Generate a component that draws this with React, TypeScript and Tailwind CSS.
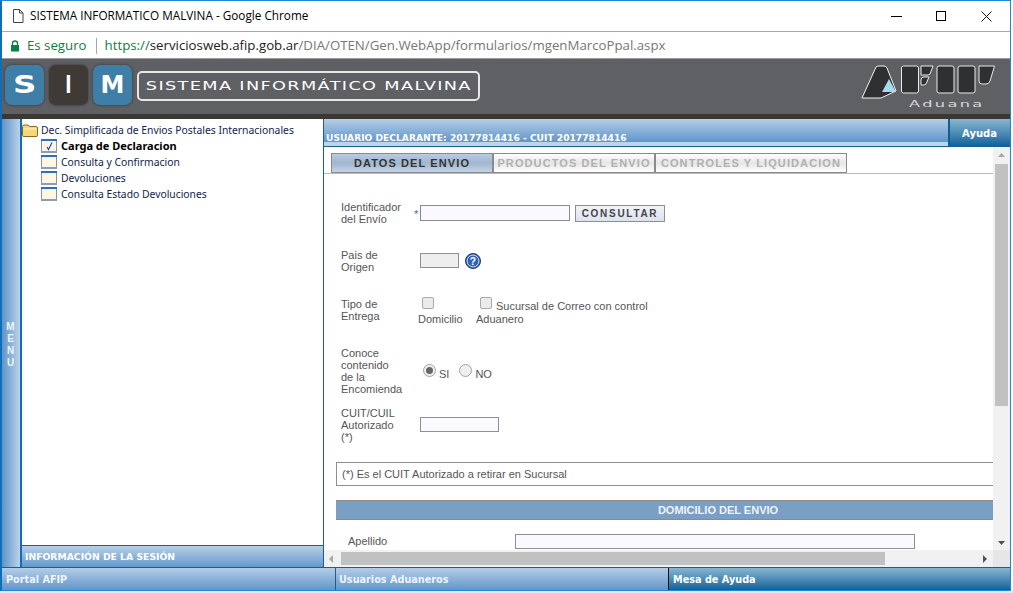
import React from "react";

const barFont = "font-['DejaVu_Sans',sans-serif] font-bold text-white";

function Book({ checked }: { checked?: boolean }) {
  return (
    <svg width="16" height="14" viewBox="0 0 16 14" className="shrink-0">
      <rect x="0.5" y="0.5" width="15" height="12.5" fill="#fdf6e3" stroke="#7f93b5" />
      <rect x="0" y="0" width="16" height="2" fill="#2f6fc0" />
      <rect x="0" y="12" width="16" height="2" fill="#8d9bb3" />
      {checked && <path d="M6 8l1.5 2.5L11 3.5" fill="none" stroke="#1a3fb0" strokeWidth="1.1" />}
    </svg>
  );
}

function TreeItem({ label, bold, checked }: { label: string; bold?: boolean; checked?: boolean }) {
  return (
    <div className="flex h-4 items-center gap-[4px] pl-[19px]">
      <Book checked={checked} />
      <span className={bold ? "text-[11px] font-bold text-black" : ""}>{label}</span>
    </div>
  );
}

function Tab({ label, active, width }: { label: string; active?: boolean; width: string }) {
  return (
    <div
      className={`flex h-[20px] items-center justify-center border border-[#8a8a8a] bg-linear-to-b text-[11px] font-bold tracking-[1.1px] whitespace-nowrap ${width} ${
        active ? "from-[#b8cce2] via-[#9fb6cf] to-[#c4d4e6] text-[#333]" : "from-white via-[#e6e6e6] to-white text-[#b0b0b0]"
      }`}
    >
      {label}
    </div>
  );
}

function FieldLabel({ lines }: { lines: string[] }) {
  return (
    <div className="w-[79px] shrink-0 leading-[12px]">
      {lines.map((l) => (
        <div key={l}>{l}</div>
      ))}
    </div>
  );
}

function Box() {
  return <span className="block h-[12px] w-[12px] rounded-[2px] border border-[#a9a9a9] bg-[#ebebeb]" />;
}

function Radio({ on }: { on?: boolean }) {
  return (
    <span className="flex h-[13px] w-[13px] items-center justify-center rounded-full border border-[#a3a3a3] bg-[#f0f0f0]">
      {on && <span className="h-[7px] w-[7px] rounded-full bg-[#666]" />}
    </span>
  );
}

function AfipLogo() {
  return (
    <svg width="134" height="34" viewBox="0 0 134 34" className="block">
      <path d="M1 33 L15 2 Q16 1 18 1 H23 Q25 1 26 3 L35 26 L20 33 Z" fill="#2e3031" stroke="#f2f2f2" strokeWidth="1" />
      <path d="M21 27 L28 14 L35 27 Z" fill="#a5dcec" />
      <rect x="40.5" y="1" width="17" height="27" rx="2" fill="#2e3031" stroke="#e8e8e8" />
      <path d="M60 1 H72 L69 9 Q68 10 66 10 H60 Z" fill="#2e3031" stroke="#e8e8e8" />
      <path d="M60 20 V15 Q60 12 63 12 H68 L65 19 Q64 20 62 20 Z" fill="#2e3031" stroke="#e8e8e8" />
      <rect x="76" y="1" width="17" height="27" rx="2" fill="#2e3031" stroke="#e8e8e8" />
      <rect x="97" y="1" width="17" height="27" rx="2" fill="#2e3031" stroke="#e8e8e8" />
      <path d="M118 1 H133.5 L129 16 Q128 19 125 19 H121 Q118 19 118 16 Z" fill="#2e3031" stroke="#e8e8e8" />
    </svg>
  );
}

function SimTile({ ch, dark, stretch }: { ch: string; dark?: boolean; stretch: string }) {
  return (
    <div
      className={`flex h-[40px] w-[39px] items-center justify-center rounded-[7px] font-['DejaVu_Sans',sans-serif] text-[24px] font-bold leading-none text-white shadow-[0_0_3px_#333] ${
        dark ? "bg-[#3f3a36]" : "bg-[#3f7ea6]"
      }`}
    >
      <span className={`inline-block ${stretch}`}>{ch}</span>
    </div>
  );
}

export default function App() {
  return (
    <div className="h-[593px] w-[1013px] overflow-hidden bg-white font-['Liberation_Sans',sans-serif]">
      <div className="flex h-[591px] w-[1011px] flex-col border-y border-r border-l-2 border-y-[#1e88d8] border-r-[#1e88d8] border-l-[#0d6fb8] bg-white">
        {/* title bar */}
        <div className="flex h-[31px] shrink-0 items-center border-b border-[#a9a9a9] pl-[9px] font-['Open_Sans',sans-serif] text-[11.75px] text-black">
          <svg width="14" height="16" viewBox="0 0 14 16" className="mr-[5px]">
            <path d="M2.5 1.5H8.5L12 5V14.5H2.5Z M8.5 1.5V5H12" fill="#fff" stroke="#444" />
          </svg>
          <span>SISTEMA INFORMATICO MALVINA - Google Chrome</span>
          <div className="ml-auto flex items-center pr-[18px]">
            <span className="mr-[34px] block h-px w-[11px] bg-black" />
            <span className="mr-[35px] block h-[10px] w-[10px] border border-black" />
            <svg width="11" height="11" viewBox="0 0 11 11">
              <path d="M0.5 0.5L10.5 10.5M10.5 0.5L0.5 10.5" stroke="#111" strokeWidth="1" />
            </svg>
          </div>
        </div>
        {/* address bar */}
        <div className="flex h-[27px] shrink-0 items-center border-b border-[#9b9b9b] pl-[8px] pt-[2px] font-['Open_Sans',sans-serif] text-[13.25px]">
          <svg width="10" height="12" viewBox="0 0 10 12" className="mr-[7px]">
            <path d="M2.5 5V3.5a2.5 2.5 0 0 1 5 0V5" fill="none" stroke="#0b8043" strokeWidth="1.3" />
            <rect x="1" y="5" width="8" height="6.5" fill="#0b8043" />
          </svg>
          <span className="text-[#0b8043]">Es seguro</span>
          <span className="ml-[9px] mr-[8px] h-[16px] w-px bg-[#a8a8a8]" />
          <span className="text-[#0b8043]">https://</span>
          <span className="text-[#222]">serviciosweb.afip.gob.ar</span>
          <span className="text-[#777]">/DIA/OTEN/Gen.WebApp/formularios/mgenMarcoPpal.aspx</span>
        </div>
        {/* header */}
        <div className="flex h-[60px] shrink-0 items-center border-b-[5px] border-[#3b3733] bg-[#5e6064] pl-[3px]">
          <div className="mt-[-3px] flex gap-[5px]">
            <SimTile ch="S" stretch="scale-x-[1.35]" />
            <SimTile ch="I" dark stretch="scale-x-[0.7]" />
            <SimTile ch="M" stretch="scale-x-100" />
          </div>
          <div className="mt-[-1px] ml-[5px] flex h-[30px] w-[343px] items-center justify-center rounded-[5px] border-2 border-[#e6e6e6] font-['DejaVu_Sans',sans-serif] text-[13px] tracking-[1px] whitespace-nowrap text-white">
            <span className="inline-block scale-x-[1.36]">SISTEMA INFORMÁTICO MALVINA</span>
          </div>
          <div className="ml-auto mr-[15px]">
            <AfipLogo />
            <div className="ml-[48px] origin-left scale-x-[1.7] font-['DejaVu_Sans',sans-serif] text-[9.5px] leading-[9px] tracking-[1.4px] text-[#d8d8d8]">
              Aduana
            </div>
          </div>
        </div>
        {/* body */}
        <div className="flex min-h-0 flex-1">
          {/* menu strip */}
          <div className="flex w-[20px] shrink-0 flex-col items-center justify-center border-r-2 border-[#0d6fb8] bg-linear-to-r from-[#5e94c8] to-[#bcd2e8] pr-[1px] pt-[3px] text-[10px] font-bold leading-[12px] text-[#eef4fb]">
            <span>M</span>
            <span>E</span>
            <span>N</span>
            <span>U</span>
          </div>
          {/* tree */}
          <div className="flex w-[302px] shrink-0 flex-col border-r border-[#1a5f92]">
            <div className="flex-1 pt-[3px] font-['Noto_Sans',sans-serif] text-[10.35px] leading-4 text-[#111f4a]">
              <div className="flex h-4 items-center gap-[3px]">
                <svg width="16" height="13" viewBox="0 0 16 13" className="shrink-0">
                  <path d="M0.5 2.5Q0.5 1 2 1H6L7.5 2.5H14Q15.5 2.5 15.5 4V11.5Q15.5 12.5 14 12.5H2Q0.5 12.5 0.5 11.5Z" fill="#f5d777" stroke="#8a6a1e" />
                  <path d="M1.5 5H14.5" stroke="#fff3bd" />
                </svg>
                <span>Dec. Simplificada de Envios Postales Internacionales</span>
              </div>
              <TreeItem label="Carga de Declaracion" bold checked />
              <TreeItem label="Consulta y Confirmacion" />
              <TreeItem label="Devoluciones" />
              <TreeItem label="Consulta Estado Devoluciones" />
            </div>
            <div className={`flex h-[22px] items-center border-t border-[#1a5f92] bg-linear-to-b from-[#b8d0e8] to-[#6498cb] pl-[3px] text-[9.25px] text-[#e6eff9] ${barFont}`}>
              INFORMACIÓN DE LA SESIÓN
            </div>
          </div>
          {/* main */}
          <div className="flex min-w-0 flex-1 flex-col">
            <div className="flex h-[28px] shrink-0 border-b border-[#1a5f92]">
              <div className="flex flex-1 flex-col overflow-hidden">
                <div className={`h-[23px] bg-linear-to-b from-[#b5cde6] to-[#6096c9] pl-[2px] pt-[13px] text-[9.15px] leading-[12px] whitespace-nowrap ${barFont}`}>
                  USUARIO DECLARANTE: 20177814416 - CUIT 20177814416
                </div>
                <div className="h-[4px] bg-[#bdd5ea]" />
              </div>
              <div className={`flex w-[62px] items-center justify-center border-l-2 border-[#0d5f96] bg-linear-to-b from-[#86b6d0] to-[#06639b] pt-[1px] pr-[1px] text-[10px] ${barFont}`}>
                Ayuda
              </div>
            </div>
            <div className="flex min-h-0 flex-1 flex-col">
              <div className="flex min-h-0 flex-1">
                {/* form */}
                <div className="min-w-0 flex-1 overflow-hidden text-[11px] text-[#555]">
                  <div className="flex h-[27px] items-end border-b border-[#bbb] pl-[7px]">
                    <Tab label="DATOS DEL ENVIO" active width="w-[162px]" />
                    <Tab label="PRODUCTOS DEL ENVIO" width="w-[162px]" />
                    <Tab label="CONTROLES Y LIQUIDACION" width="w-[192px]" />
                  </div>
                  <div className="pl-[17px]">
                    <div className="mt-[27px] flex h-[24px]">
                      <FieldLabel lines={["Identificador", "del Envío"]} />
                      <div className="relative mt-[4px] flex items-start">
                        <span className="absolute left-[-6px] top-[1px] text-[#4455ff]">*</span>
                        <div className="h-[16px] w-[150px] border border-[#8a8a8a] bg-[#f9f9ff]" />
                        <div className="ml-[5px] flex h-[17px] w-[90px] items-center justify-center border border-[#8f8f8f] bg-linear-to-b from-[#f2f4f8] to-[#dbe3ee] text-[10px] font-bold tracking-[1.7px] text-[#444]">
                          CONSULTAR
                        </div>
                      </div>
                    </div>
                    <div className="mt-[24px] flex h-[24px]">
                      <FieldLabel lines={["Pais de", "Origen"]} />
                      <div className="mt-[4px] flex items-start">
                        <div className="h-[15px] w-[39px] border border-[#8f8f8f] bg-[#eeeeee]" />
                        <svg width="16" height="16" viewBox="0 0 17 17" className="ml-[6px]">
                          <circle cx="8.5" cy="8.5" r="8" fill="#2f62b8" stroke="#20305c" />
                          <circle cx="8.5" cy="8.5" r="6.3" fill="none" stroke="#cfe0f5" strokeWidth="1" />
                          <text x="8.5" y="12.5" textAnchor="middle" fontSize="11" fontWeight="bold" fill="#fff" fontFamily="Liberation Sans">?</text>
                        </svg>
                      </div>
                    </div>
                    <div className="mt-[25px] flex h-[28px]">
                      <FieldLabel lines={["Tipo de", "Entrega"]} />
                      <div className="mt-[-1px] flex-1">
                        <div className="flex">
                          <div className="ml-[-2px] w-[58px]">
                            <div className="ml-[4px]"><Box /></div>
                            <div className="mt-[4px] leading-[13px]">Domicilio</div>
                          </div>
                          <div>
                            <div className="flex items-start">
                              <div className="ml-[4px]"><Box /></div>
                              <span className="ml-[4px] mt-[3px] leading-[13px]">Sucursal de Correo con control</span>
                            </div>
                            <div className="leading-[13px]">Aduanero</div>
                          </div>
                        </div>
                      </div>
                    </div>
                    <div className="mt-[21px] flex h-[48px]">
                      <FieldLabel lines={["Conoce", "contenido", "de la", "Encomienda"]} />
                      <div className="mt-[17px] flex h-[14px] items-start pl-[3px] leading-[20px]">
                        <Radio on />
                        <span className="ml-[3px]">SI</span>
                        <span className="ml-[10px]"><Radio /></span>
                        <span className="ml-[3px]">NO</span>
                      </div>
                    </div>
                    <div className="mt-[12px] flex h-[36px]">
                      <FieldLabel lines={["CUIT/CUIL", "Autorizado", "(*)"]} />
                      <div className="mt-[10px] h-[15px] w-[79px] border border-[#8f8f8f] bg-[#f9f9ff]" />
                    </div>
                  </div>
                  <div className="ml-[12px] mt-[19px] flex h-[24px] items-center border border-r-0 border-[#8f8f8f] pl-[5px]">
                    (*) Es el CUIT Autorizado a retirar en Sucursal
                  </div>
                  <div className="ml-[12px] mt-[14px] flex h-[20px] w-[764px] items-center justify-center border-y border-[#8b8b8b] bg-[#7b9fc4] text-[11px] font-bold text-[#eef3fa]">
                    DOMICILIO DEL ENVIO
                  </div>
                  <div className="mt-[14px] flex h-[15px] items-center pl-[24px]">
                    <span className="w-[167px] leading-[13px]">Apellido</span>
                    <div className="h-[15px] w-[400px] border border-[#8f8f8f] bg-[#f9f9ff]" />
                  </div>
                </div>
                {/* vertical scrollbar */}
                <div className="flex w-[17px] shrink-0 flex-col items-center bg-[#f1f1f1]">
                  <svg width="9" height="17" viewBox="0 0 9 17" className="shrink-0"><path d="M1 10L4.5 6L8 10Z" fill="#a8a8a8" /></svg>
                  <div className="h-[242px] w-[13px] bg-[#c1c1c1]" />
                  <div className="flex-1" />
                  <svg width="9" height="14" viewBox="0 0 9 14" className="shrink-0"><path d="M1 5L4.5 9L8 5Z" fill="#505050" /></svg>
                </div>
              </div>
              {/* horizontal scrollbar */}
              <div className="flex h-[17px] shrink-0 items-center bg-[#f1f1f1]">
                <svg width="17" height="14" viewBox="0 0 17 14" className="shrink-0"><path d="M9 3L5 7L9 11Z" fill="#a8a8a8" /></svg>
                <div className="h-[13px] w-[544px] bg-[#c1c1c1]" />
                <div className="flex-1" />
                <svg width="14" height="14" viewBox="0 0 14 14" className="shrink-0"><path d="M4 3L8 7L4 11Z" fill="#505050" /></svg>
                <div className="h-[17px] w-[17px] bg-[#e6e6e6]" />
              </div>
            </div>
          </div>
        </div>
        {/* footer */}
        <div className={`flex h-[23px] shrink-0 border-t border-[#1a5f92] pt-0 text-[9.7px] ${barFont}`}>
          <div className="flex w-[334px] items-center border-r border-[#1a5f92] bg-linear-to-b from-[#b5cde6] to-[#6096c9] pl-[4px] pt-[2px] text-[#eef4fb]">Portal AFIP</div>
          <div className="flex w-[333px] items-center border-r border-[#111] bg-linear-to-b from-[#b5cde6] to-[#6096c9] pl-[3px] pt-[2px] text-[#eef4fb]">Usuarios Aduaneros</div>
          <div className="flex flex-1 items-center bg-linear-to-b from-[#86b6d0] to-[#06639b] pl-[4px] pt-[2px]">Mesa de Ayuda</div>
        </div>
      </div>
      <div className="h-[2px] bg-[#e6e6e6]" />
    </div>
  );
}
